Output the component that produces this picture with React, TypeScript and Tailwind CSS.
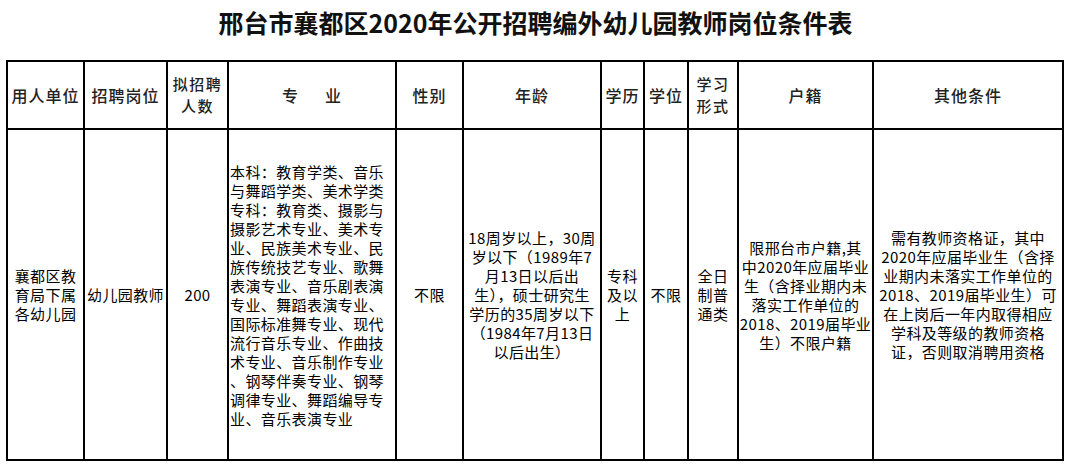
import React from "react";

// column widths are the white space between the 2px rules
const GRID =
  "grid grid-cols-[75px_81px_59px_166px_65px_136px_41px_42px_48px_133px_188px] grid-rows-[66px_329px] gap-[2px] p-[2px] bg-black";

const majorLines = [
  "本科：教育学类、音乐",
  "与舞蹈学类、美术学类",
  "专科：教育类、摄影与",
  "摄影艺术专业、美术专",
  "业、民族美术专业、民",
  "族传统技艺专业、歌舞",
  "表演专业、音乐剧表演",
  "专业、舞蹈表演专业、",
  "国际标准舞专业、现代",
  "流行音乐专业、作曲技",
  "术专业、音乐制作专业",
  "、钢琴伴奏专业、钢琴",
  "调律专业、舞蹈编导专",
  "业、音乐表演专业",
];

const ageLines = [
  "18周岁以上，30周",
  "岁以下（1989年7",
  "月13日以后出",
  "生），硕士研究生",
  "学历的35周岁以下",
  "（1984年7月13日",
  "以后出生）",
];

const hukouLines = [
  "限邢台市户籍,其",
  "中2020年应届毕业",
  "生（含择业期内未",
  "落实工作单位的",
  "2018、2019届毕业",
  "生）不限户籍",
];

const otherLines = [
  "需有教师资格证，其中",
  "2020年应届毕业生（含择",
  "业期内未落实工作单位的",
  "2018、2019届毕业生）可",
  "在上岗后一年内取得相应",
  "学科及等级的教师资格",
  "证，否则取消聘用资格",
];

const Head: React.FC<{ children: React.ReactNode; two?: boolean }> = ({ children, two }) => (
  <div
    className={
      two
        ? "bg-white flex flex-col items-center justify-center text-center text-[15px] leading-[22px] tracking-[1.5px] font-medium text-[#222]"
        : "bg-white flex flex-col items-center justify-center text-center text-[16px] leading-[24px] tracking-[1px] font-medium text-[#222]"
    }
  >
    {children}
  </div>
);

const Lines: React.FC<{ lines: string[]; left?: boolean }> = ({ lines, left }) => (
  <div
    className={
      left
        ? "bg-white flex flex-col justify-center pl-[1px] text-[15px] leading-[19px] tracking-[0.4px]"
        : "bg-white flex flex-col justify-center items-center text-center text-[15px] leading-[19px] tracking-[0.4px]"
    }
  >
    {lines.map((l, i) => (
      <div key={i} className="whitespace-nowrap">
        {l}
      </div>
    ))}
  </div>
);

export default function App() {
  return (
    <div className="w-[1071px] h-[466px] bg-white text-black font-['Noto_Sans_CJK_SC','Noto_Sans',sans-serif]">
      <h1 className="h-[60px] pt-[7px] text-center text-[25px] leading-[30px] font-bold text-[#111]">
        邢台市襄都区2020年公开招聘编外幼儿园教师岗位条件表
      </h1>

      <div className={`ml-[6px] w-[1058px] ${GRID}`}>
        {/* header row */}
        <Head>用人单位</Head>
        <Head>招聘岗位</Head>
        <Head two>
          <span>拟招聘</span>
          <span>人数</span>
        </Head>
        <Head>
          <span>
            专<span className="ml-[26px]">业</span>
          </span>
        </Head>
        <Head>性别</Head>
        <Head>年龄</Head>
        <Head>学历</Head>
        <Head>学位</Head>
        <Head two>
          <span>学习</span>
          <span>形式</span>
        </Head>
        <Head>户籍</Head>
        <Head>其他条件</Head>

        {/* body row */}
        <Lines lines={["襄都区教", "育局下属", "各幼儿园"]} />
        <Lines lines={["幼儿园教师"]} />
        <Lines lines={["200"]} />
        <Lines lines={majorLines} left />
        <Lines lines={["不限"]} />
        <Lines lines={ageLines} />
        <Lines lines={["专科", "及以", "上"]} />
        <Lines lines={["不限"]} />
        <Lines lines={["全日", "制普", "通类"]} />
        <Lines lines={hukouLines} />
        <Lines lines={otherLines} />
      </div>
    </div>
  );
}
